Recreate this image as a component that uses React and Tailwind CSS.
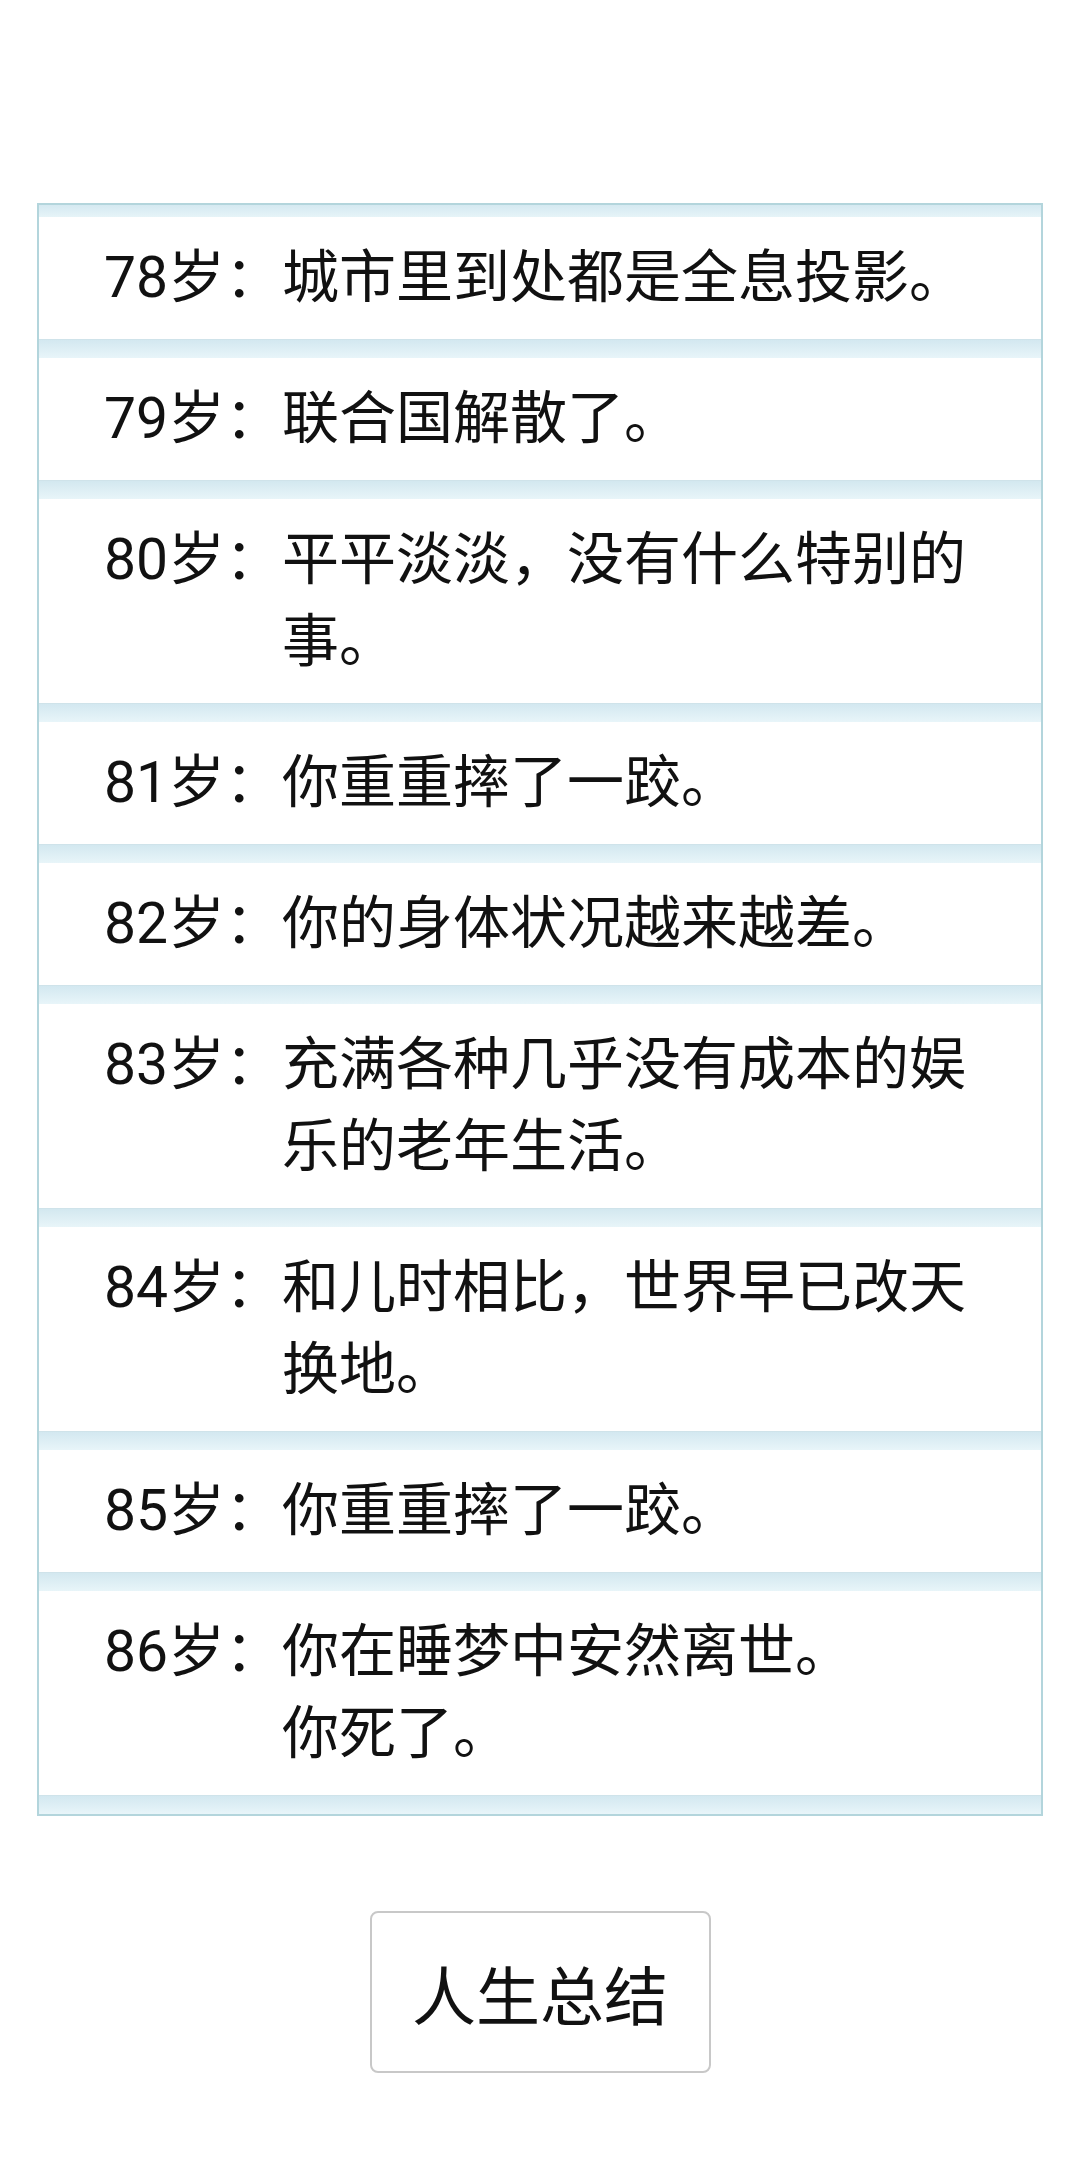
import React from "react";

const events = [
  { age: 78, lines: ["城市里到处都是全息投影。"] },
  { age: 79, lines: ["联合国解散了。"] },
  { age: 80, lines: ["平平淡淡，没有什么特别的事。"] },
  { age: 81, lines: ["你重重摔了一跤。"] },
  { age: 82, lines: ["你的身体状况越来越差。"] },
  { age: 83, lines: ["充满各种几乎没有成本的娱乐的老年生活。"] },
  { age: 84, lines: ["和儿时相比，世界早已改天换地。"] },
  { age: 85, lines: ["你重重摔了一跤。"] },
  { age: 86, lines: ["你在睡梦中安然离世。", "你死了。"] },
];

const Band = ({ top }) => (
  <div
    className={
      top
        ? "h-[12px] bg-gradient-to-b from-[#d5e9f1] to-[#e6f4f8]"
        : "h-[19px] bg-gradient-to-b from-[#d3e8f0] to-[#e8f5f9] border-t border-[#cfe3ea]"
    }
  />
);

const Row = ({ age, lines }) => (
  <div className="flex bg-white pl-[65px] pr-[40px] py-[20px] text-[57px] leading-[82px] text-[#111]">
    <span className="whitespace-nowrap">{age}岁：</span>
    <div className="flex-1">
      {lines.map((line, i) => (
        <div key={i}>{line}</div>
      ))}
    </div>
  </div>
);

export default function App() {
  return (
    <div className="min-h-[2158px] bg-white pt-[203px] font-['Roboto','Noto_Sans_CJK_SC',sans-serif]">
      <div className="mx-[37px] border-2 border-[#b3d5dc]">
        <Band top />
        {events.map((e) => (
          <React.Fragment key={e.age}>
            <Row age={e.age} lines={e.lines} />
            <Band />
          </React.Fragment>
        ))}
      </div>

      <div className="flex justify-center mt-[95px]">
        <button className="w-[341px] h-[162px] border-2 border-[#c8c8c8] rounded-[8px] bg-white text-[64px] text-[#111] font-['Noto_Sans_CJK_SC',sans-serif]">
          人生总结
        </button>
      </div>
    </div>
  );
}
